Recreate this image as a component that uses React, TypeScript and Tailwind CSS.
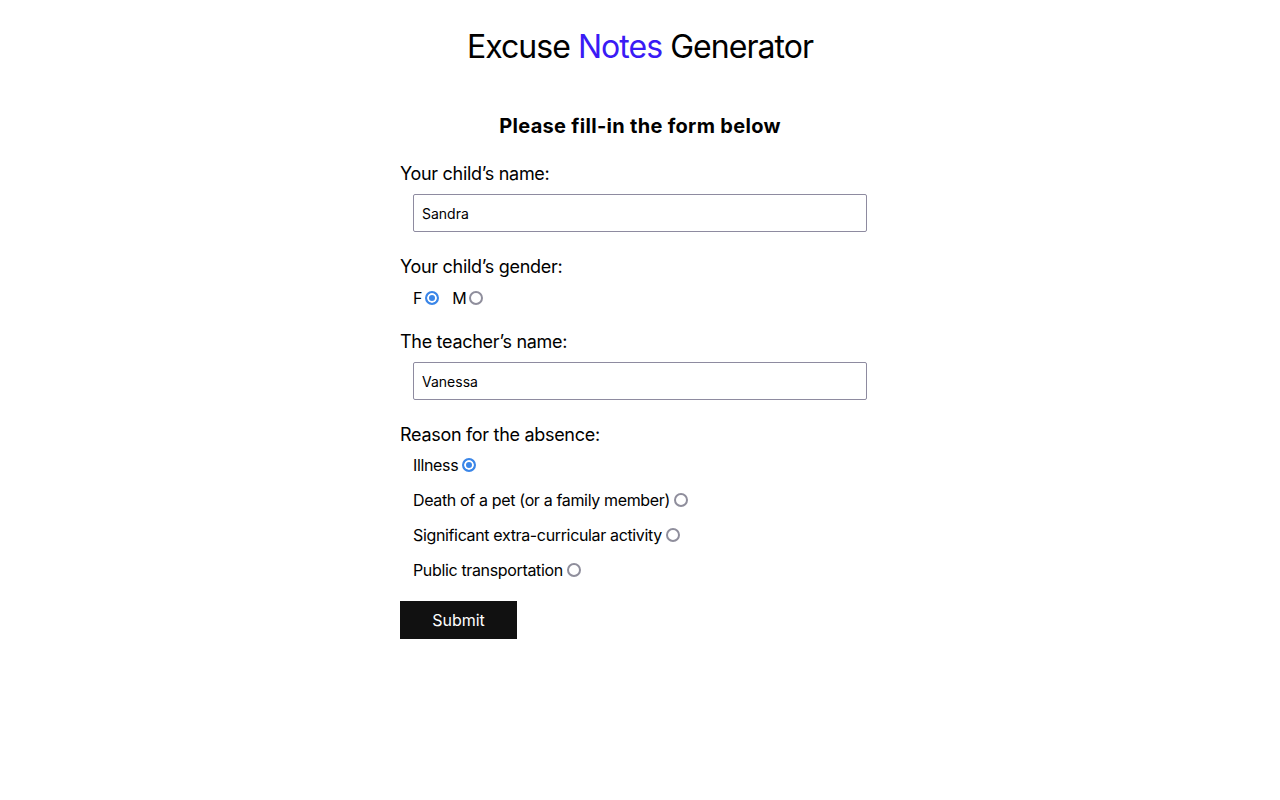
import { useState } from "react";

const reasons = [
  "Illness",
  "Death of a pet (or a family member)",
  "Significant extra-curricular activity",
  "Public transportation",
];

const radio =
  "appearance-none shrink-0 w-[14px] h-[14px] rounded-full border-2 border-[#8f8e9c] bg-white checked:border-[#3a86e8] checked:bg-[#3a86e8] checked:shadow-[inset_0_0_0_2px_white]";

export default function App() {
  const [name, setName] = useState("Sandra");
  const [teacher, setTeacher] = useState("Vanessa");
  const [gender, setGender] = useState("F");
  const [reason, setReason] = useState(reasons[0]);

  return (
    <div className="min-h-screen bg-white text-black flex flex-col items-center font-['Inter',sans-serif]">
      <h1 className="mt-[23px] text-[32px] leading-[48px] font-normal tracking-[-0.03em]">
        Excuse <span className="text-[#3a1bf5]">Notes</span> Generator
      </h1>

      <form className="w-[480px] mt-[40px] flex flex-col" onSubmit={(e) => e.preventDefault()}>
        <h2 className="text-[20px] leading-[30px] font-bold text-center tracking-[0.3px]">Please fill-in the form below</h2>

        <label className="mt-[19px] text-[18px] leading-[27px] tracking-[-0.3px]">Your child’s name:</label>
        <input
          value={name}
          onChange={(e) => setName(e.target.value)}
          className="mt-[7px] ml-[13px] w-[454px] h-[38px] px-[8px] text-[14px] border border-[#8e8ba0] rounded-[2px] outline-none"
        />

        <label className="mt-[21px] text-[18px] leading-[27px] tracking-[-0.3px]">Your child’s gender:</label>
        <div className="mt-[6px] ml-[13px] flex items-center h-[24px] text-[16px] tracking-[-0.3px]">
          {["F", "M"].map((g) => (
            <label key={g} className="flex items-center mr-[13px]">
              {g}
              <input
                type="radio"
                name="gender"
                checked={gender === g}
                onChange={() => setGender(g)}
                className={"ml-[3px] " + radio}
              />
            </label>
          ))}
        </div>

        <label className="mt-[18px] text-[18px] leading-[27px] tracking-[-0.3px]">The teacher’s name:</label>
        <input
          value={teacher}
          onChange={(e) => setTeacher(e.target.value)}
          className="mt-[7px] ml-[13px] w-[454px] h-[38px] px-[8px] text-[14px] border border-[#8e8ba0] rounded-[2px] outline-none"
        />

        <label className="mt-[21px] text-[18px] leading-[27px] tracking-[-0.3px]">Reason for the absence:</label>
        <div className="mt-[5px] ml-[13px] flex flex-col gap-[11px] text-[16px] tracking-[-0.35px]">
          {reasons.map((r) => (
            <label key={r} className="flex items-center h-[24px]">
              {r}
              <input
                type="radio"
                name="reason"
                checked={reason === r}
                onChange={() => setReason(r)}
                className={"ml-[4px] " + radio}
              />
            </label>
          ))}
        </div>

        <button type="submit" className="mt-[19px] w-[117px] h-[38px] bg-[#111111] text-white text-[16px]">
          Submit
        </button>
      </form>
    </div>
  );
}
